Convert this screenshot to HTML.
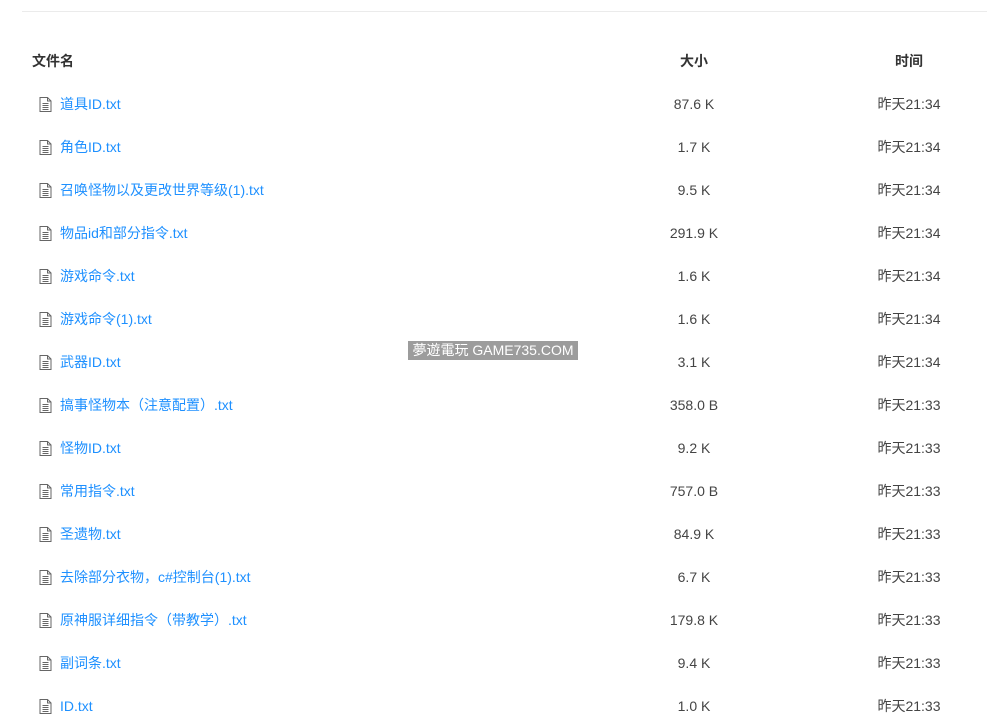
<!DOCTYPE html>
<html><head><meta charset="utf-8"><style>
body{margin:0;width:987px;height:701px;overflow:hidden;background:#fff;font-family:"Liberation Sans","Noto Sans CJK SC",sans-serif;font-size:14px;color:#333;position:relative}
.line{position:absolute;left:22px;right:0;top:11px;height:1px;background:#ebebeb}
.r{position:absolute;left:0;width:987px;height:20px;line-height:20px}
.n{position:absolute;left:60px;color:#1e90ff;white-space:nowrap}
.s{position:absolute;left:594px;width:200px;text-align:center;color:#444}
.t{position:absolute;left:809px;width:200px;text-align:center;color:#444}
.h{font-weight:bold;color:#333}
.ic{position:absolute;left:39px;top:3px}
.wm{position:absolute;left:408px;top:341px;width:170px;height:19px;background:#9c9c9c;color:#fff;font-size:14px;line-height:19px;text-align:center;white-space:nowrap}
</style></head><body>
<div class="line"></div>
<div class="r" style="top:51px"><span class="h" style="position:absolute;left:32px">文件名</span><span class="s h">大小</span><span class="t h">时间</span></div>
<div id="rows"></div>
<script>
var d=[["道具ID.txt","87.6 K","昨天21:34"],["角色ID.txt","1.7 K","昨天21:34"],["召唤怪物以及更改世界等级(1).txt","9.5 K","昨天21:34"],["物品id和部分指令.txt","291.9 K","昨天21:34"],["游戏命令.txt","1.6 K","昨天21:34"],["游戏命令(1).txt","1.6 K","昨天21:34"],["武器ID.txt","3.1 K","昨天21:34"],["搞事怪物本（注意配置）.txt","358.0 B","昨天21:33"],["怪物ID.txt","9.2 K","昨天21:33"],["常用指令.txt","757.0 B","昨天21:33"],["圣遗物.txt","84.9 K","昨天21:33"],["去除部分衣物，c#控制台(1).txt","6.7 K","昨天21:33"],["原神服详细指令（带教学）.txt","179.8 K","昨天21:33"],["副词条.txt","9.4 K","昨天21:33"],["ID.txt","1.0 K","昨天21:33"]];
var ic='<svg class="ic" width="13" height="15" viewBox="0 0 13 15"><path d="M1 .5h7.5l3.5 3.5v10.5H1z M8.5 .5V4H12" fill="none" stroke="#666" stroke-width="1"/><path d="M3.5 6.5h6M3.5 8.5h6M3.5 10.5h6M3.5 12.5h6" stroke="#666" stroke-width="1"/></svg>';
var h='';d.forEach(function(r,i){h+='<div class="r" style="top:'+(94+43*i)+'px">'+ic+'<span class="n">'+r[0]+'</span><span class="s">'+r[1]+'</span><span class="t">'+r[2]+'</span></div>'});
document.getElementById('rows').innerHTML=h;
</script>
<div class="wm">夢遊電玩 GAME735.COM</div>
</body></html>
